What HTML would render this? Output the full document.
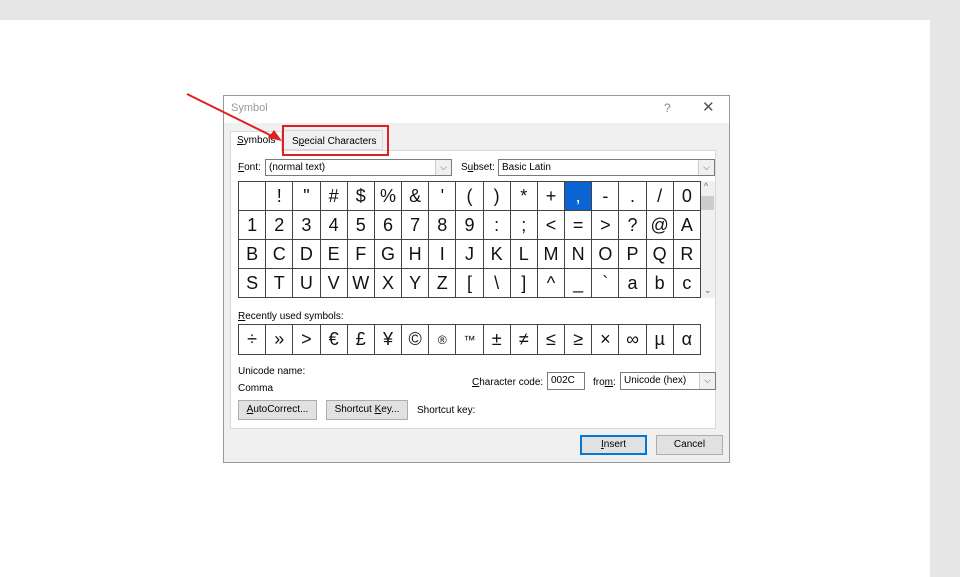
<!DOCTYPE html>
<html><head><style>
body{margin:0;width:960px;height:577px;background:#e6e6e6;position:relative;overflow:hidden;font-family:"Liberation Sans","DejaVu Sans",sans-serif;}
.abs{position:absolute}
.s{font-size:10px;color:#000}
table{border-collapse:collapse;position:absolute;table-layout:fixed}
td{border:1px solid #444;text-align:center;padding:0;font-size:18px;color:#111;background:#fff;overflow:hidden}
.btn{position:absolute;background:#e1e1e1;border:1px solid #adadad;font-size:10px;text-align:center;box-sizing:border-box}
.combo{position:absolute;background:#fff;border:1px solid #7a7a7a;font-size:10px;box-sizing:border-box;padding:2px 3px}
.dd{position:absolute;right:0;top:0;bottom:0;width:15px;border-left:1px solid #ccc;background:#f0f0f0;font-size:9px;color:#555;text-align:center;line-height:15px}
</style></head><body>
<div class="abs" style="left:0;top:20px;width:930px;height:557px;background:#fff"></div>
<div class="abs" style="left:223px;top:95px;width:507px;height:368px;background:#f0f0f0;border:1px solid #999;box-sizing:border-box"></div>
<div class="abs" style="left:224px;top:96px;width:505px;height:27px;background:#fff"></div>
<div class="abs" style="left:231px;top:102px;font-size:11px;color:#999">Symbol</div>
<div class="abs" style="left:664px;top:101px;font-size:12px;color:#888">?</div>
<div class="abs" style="left:702px;top:98px;font-size:15px;color:#555">✕</div>
<div class="abs" style="left:230px;top:150px;width:486px;height:279px;background:#fff;border:1px solid #d9d9d9;box-sizing:border-box"></div>
<div class="abs" style="left:230px;top:131px;width:52px;height:20px;background:#fff;border:1px solid #d9d9d9;border-bottom:none;box-sizing:border-box"></div>
<div class="abs s" style="left:237px;top:135px"><u>S</u>ymbols</div>
<div class="abs" style="left:283px;top:130px;width:100px;height:20px;background:#f0f0f0;border:1px solid #d9d9d9;box-sizing:border-box"></div>
<div class="abs s" style="left:292px;top:136px">S<u>p</u>ecial Characters</div>
<div class="abs" style="left:282px;top:125px;width:107px;height:31px;border:2px solid #e02020;box-sizing:border-box"></div>
<svg class="abs" style="left:180px;top:88px" width="110" height="60"><line x1="7" y1="6" x2="96" y2="50" stroke="#e02020" stroke-width="2"/><polygon points="102,53 88,50 94,42" fill="#e02020"/></svg>
<div class="abs s" style="left:238px;top:162px"><u>F</u>ont:</div>
<div class="combo" style="left:265px;top:159px;width:187px;height:17px">(normal text)<div class="dd">⌵</div></div>
<div class="abs s" style="left:461px;top:162px">S<u>u</u>bset:</div>
<div class="combo" style="left:498px;top:159px;width:217px;height:17px">Basic Latin<div class="dd">⌵</div></div>
<table style="left:238px;top:181px;width:463px;height:117px">
<tr><td></td><td>!</td><td>"</td><td>#</td><td>$</td><td>%</td><td>&amp;</td><td>'</td><td>(</td><td>)</td><td>*</td><td>+</td><td style="background:#0a64d2;color:#fff">,</td><td>-</td><td>.</td><td>/</td><td>0</td></tr>
<tr><td>1</td><td>2</td><td>3</td><td>4</td><td>5</td><td>6</td><td>7</td><td>8</td><td>9</td><td>:</td><td>;</td><td>&lt;</td><td>=</td><td>&gt;</td><td>?</td><td>@</td><td>A</td></tr>
<tr><td>B</td><td>C</td><td>D</td><td>E</td><td>F</td><td>G</td><td>H</td><td>I</td><td>J</td><td>K</td><td>L</td><td>M</td><td>N</td><td>O</td><td>P</td><td>Q</td><td>R</td></tr>
<tr><td>S</td><td>T</td><td>U</td><td>V</td><td>W</td><td>X</td><td>Y</td><td>Z</td><td>[</td><td>\</td><td>]</td><td>^</td><td>_</td><td>`</td><td>a</td><td>b</td><td>c</td></tr>
</table>
<div class="abs" style="left:701px;top:181px;width:14px;height:117px;background:#f0f0f0"></div>
<div class="abs" style="left:701px;top:196px;width:13px;height:14px;background:#cdcdcd"></div>
<div class="abs" style="left:704px;top:181px;font-size:9px;color:#666">^</div>
<div class="abs" style="left:704px;top:285px;font-size:9px;color:#666">⌄</div>
<div class="abs s" style="left:238px;top:311px"><u>R</u>ecently used symbols:</div>
<table style="left:238px;top:324px;width:463px;height:31px">
<tr><td>÷</td><td>»</td><td>&gt;</td><td>€</td><td>£</td><td>¥</td><td>©</td><td style="font-size:12px">®</td><td style="font-size:12px">™</td><td>±</td><td>≠</td><td>≤</td><td>≥</td><td>×</td><td>∞</td><td>µ</td><td>α</td></tr>
</table>
<div class="abs s" style="left:238px;top:366px">Unicode name:</div>
<div class="abs s" style="left:238px;top:383px">Comma</div>
<div class="abs s" style="left:472px;top:377px"><u>C</u>haracter code:</div>
<div class="combo" style="left:547px;top:372px;width:38px;height:18px">002C</div>
<div class="abs s" style="left:593px;top:377px">fro<u>m</u>:</div>
<div class="combo" style="left:620px;top:372px;width:96px;height:18px">Unicode (hex)<div class="dd">⌵</div></div>
<div class="btn" style="left:238px;top:400px;width:79px;height:20px;line-height:18px"><u>A</u>utoCorrect...</div>
<div class="btn" style="left:326px;top:400px;width:82px;height:20px;line-height:18px">Shortcut <u>K</u>ey...</div>
<div class="abs s" style="left:417px;top:405px">Shortcut key:</div>
<div class="btn" style="left:580px;top:435px;width:67px;height:20px;line-height:16px;border:2px solid #0078d7"><u>I</u>nsert</div>
<div class="btn" style="left:656px;top:435px;width:67px;height:20px;line-height:18px">Cancel</div>
</body></html>
